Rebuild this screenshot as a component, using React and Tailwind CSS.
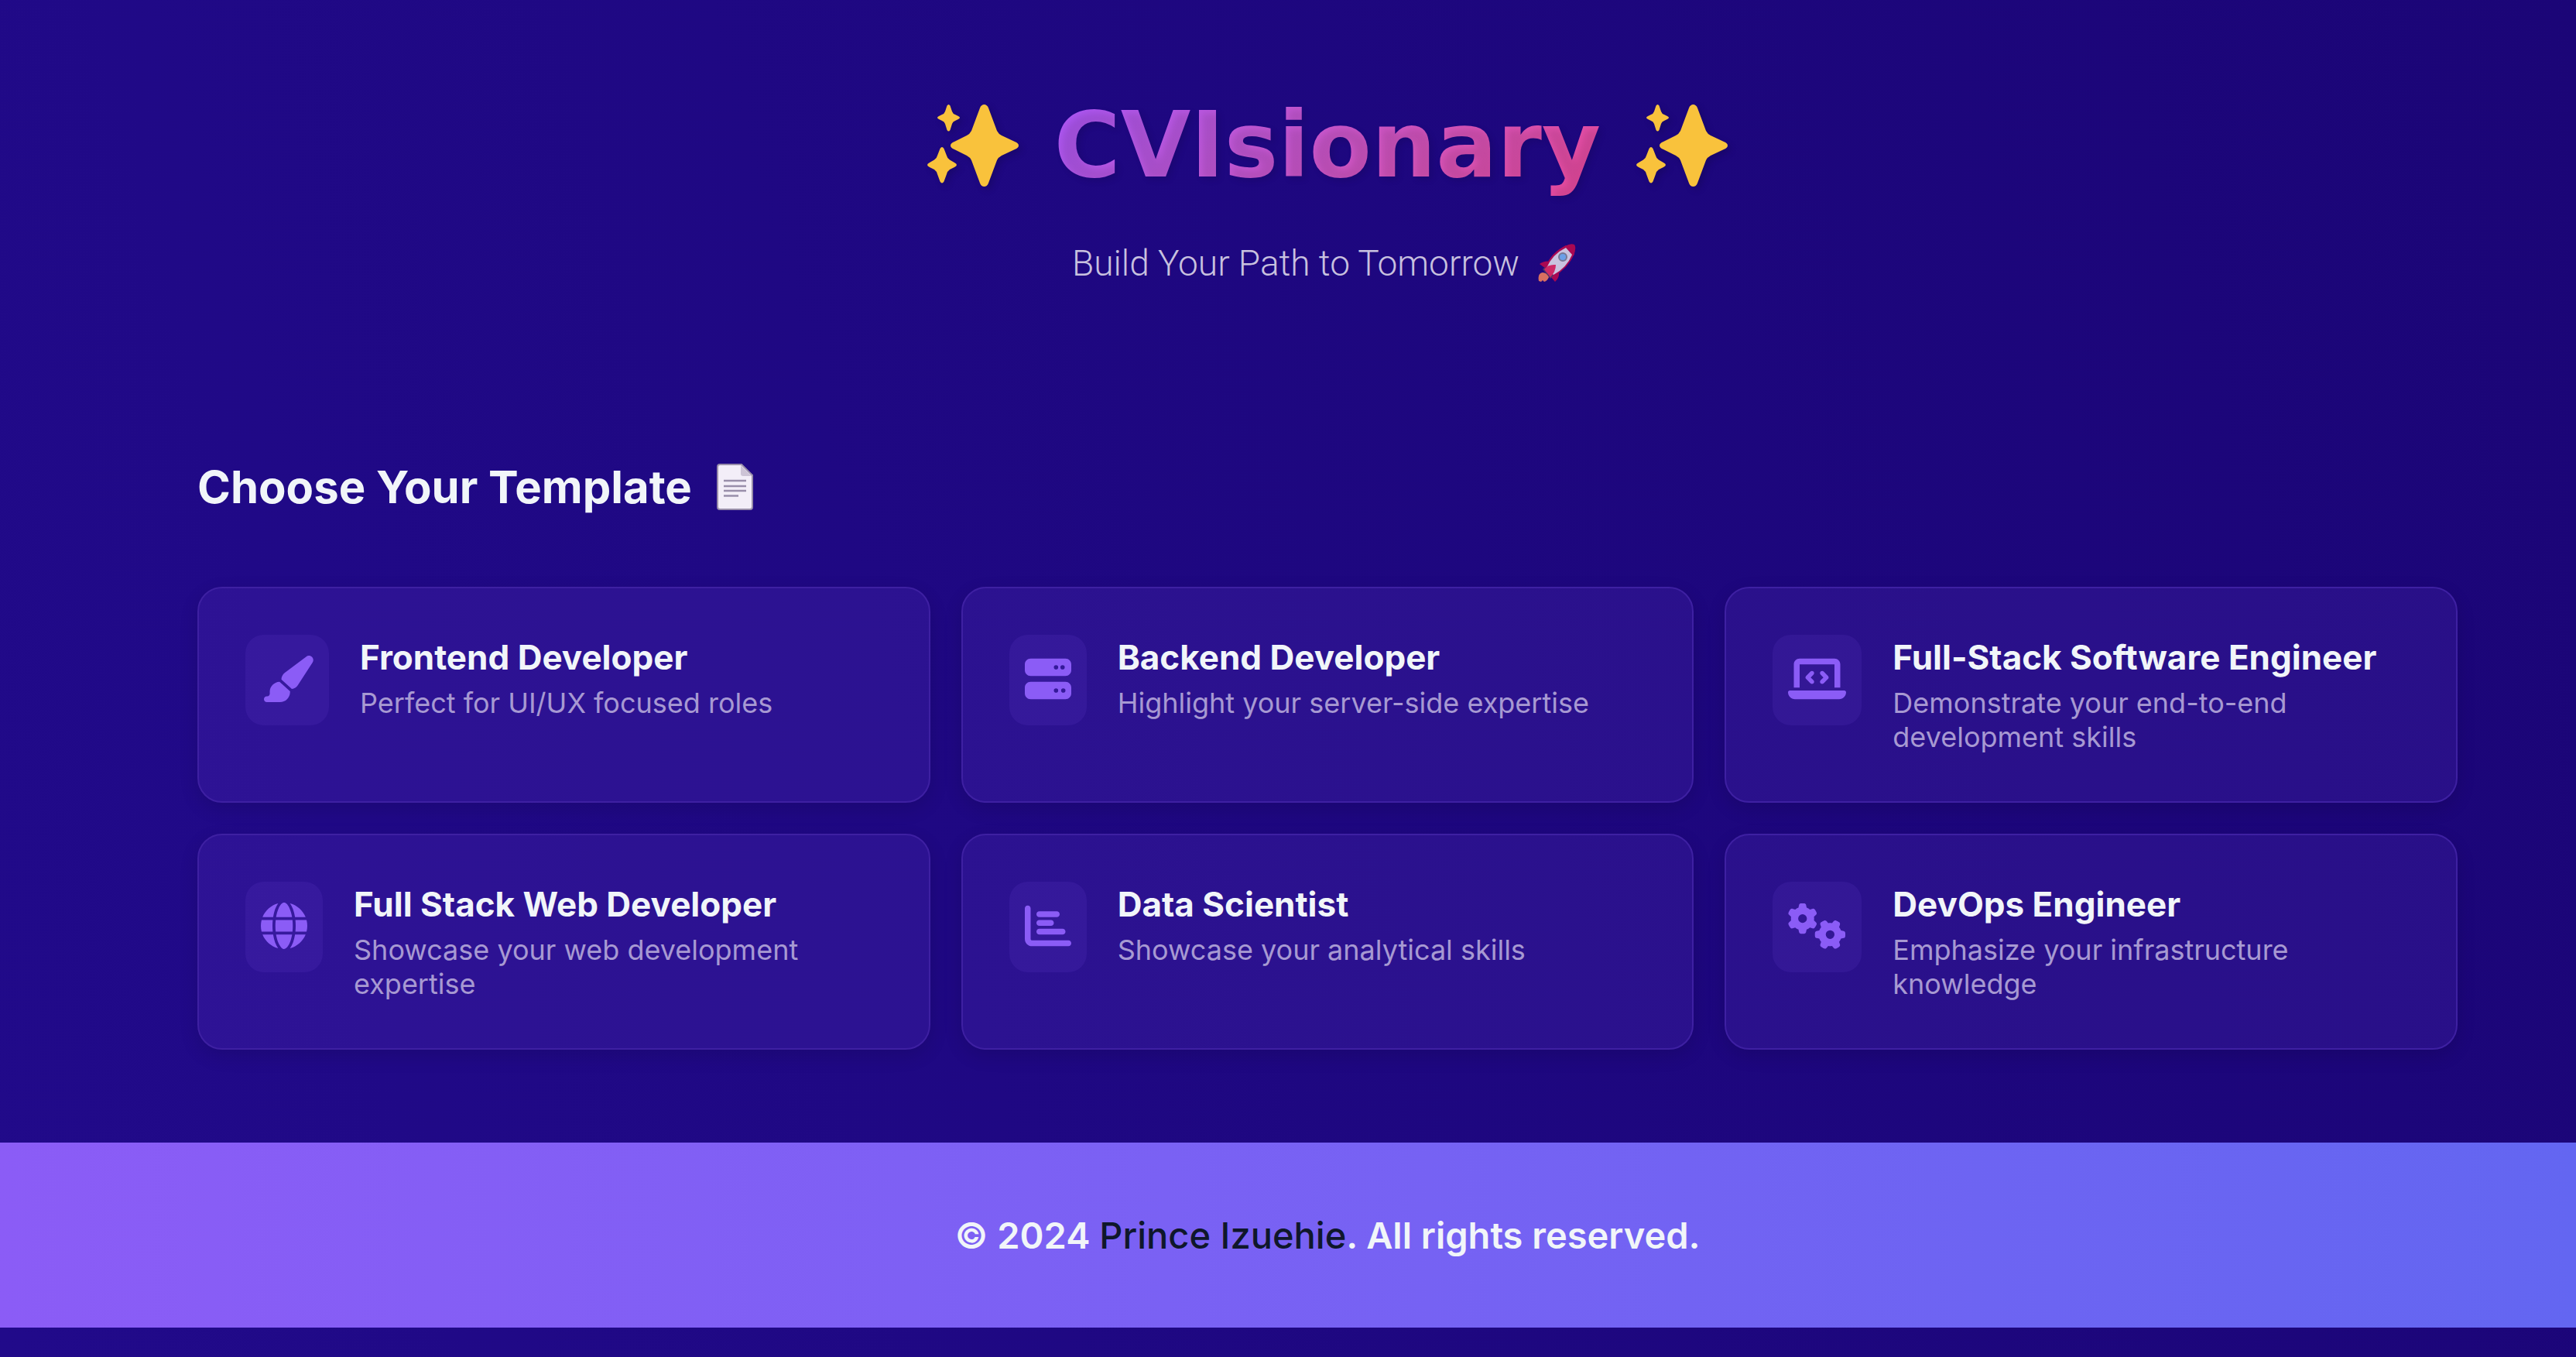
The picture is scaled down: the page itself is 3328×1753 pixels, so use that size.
import { FaPaintbrush, FaServer, FaLaptopCode, FaGlobe, FaChartBar, FaGears } from "react-icons/fa6";

const templates = [
  { title: "Frontend Developer", text: "Perfect for UI/UX focused roles", Icon: FaPaintbrush, size: "w-[68px]" },
  { title: "Backend Developer", text: "Highlight your server-side expertise", Icon: FaServer, size: "w-[60px]" },
  { title: "Full-Stack Software Engineer", text: "Demonstrate your end-to-end development skills", Icon: FaLaptopCode, size: "w-[75px]" },
  { title: "Full Stack Web Developer", text: "Showcase your web development expertise", Icon: FaGlobe, size: "w-[60px]" },
  { title: "Data Scientist", text: "Showcase your analytical skills", Icon: FaChartBar, size: "w-[60px]" },
  { title: "DevOps Engineer", text: "Emphasize your infrastructure knowledge", Icon: FaGears, size: "w-[75px]" },
];

function Sparkles() {
  return (
    <svg viewBox="0 0 118 106" className="h-[106px] w-[118px] shrink-0 drop-shadow-[4px_4px_4px_rgba(0,0,0,0.15)]" fill="#f9c23c" aria-hidden="true">
      <path d="M68 4.500C70-1.500 77-1.500 79 4.500L90 34Q92 38 96 40L113 48Q118 50 118 53Q118 56 113 58L96 66Q92 68 90 72L79 101.500C77 107.500 70 107.500 68 101.500L57 72Q55 68 51 66L35 58Q30 56 30 53Q30 50 35 48L51 40Q55 38 57 34Z" />
      <path d="M25.500 1.500Q27.500-1.500 29.500 1.500L32 9Q33 12 36 13L40 15Q44 17 40 19L36 21Q33 22 32 25L29.500 33Q27.500 36 25.500 33L23 25Q22 22 19 21L15 19Q11 17 15 15L19 13Q22 12 23 9Z" />
      <path d="M16.500 57Q19 53 21.500 57L25 66Q26 70 29 71.500L35 75Q41 78 35 81L29 84Q26 86 25 90L21.500 99.500Q19 103.500 16.500 99.500L13 90Q12 86 9 84L3 81Q-3 78 3 75L9 71.500Q12 70 13 66Z" />
    </svg>
  );
}

function Rocket() {
  return (
    <svg viewBox="0 0 50 50" className="size-[50px] shrink-0" aria-hidden="true">
      <path d="M1 48Q-1 38 6 37Q13 38 14 43Q12 48 8 49L6 47L4 49Z" fill="#d86f60" />
      <path d="M2 26Q8 21 17 23L10 32ZM27 36Q28 44 22 49L16 42Z" fill="#a90852" />
      <path d="M9 31Q17 11 36 2L47 13Q38 33 20 42Z" fill="#a90852" />
      <path d="M11 31Q19 13 36 5L44 14Q37 31 20 40Z" fill="#c9c2df" />
      <path d="M35 3Q42-1 47 1Q50 5 46 15Z" fill="#a90852" />
      <path d="M6 33L9 30L20 41L16 45Z" fill="#513567" />
      <path d="M8 33Q13 26 23 27Q23 36 16 43Z" fill="#cf2866" />
      <circle cx="32" cy="17" r="5" fill="#6c9fe8" stroke="#777795" strokeWidth="2" />
    </svg>
  );
}

function Page() {
  return (
    <svg viewBox="0 0 47 60" className="h-[60px] w-[47px] shrink-0" aria-hidden="true">
      <path d="M4 1H32L46 15V56Q46 59 43 59H4Q1 59 1 56V4Q1 1 4 1Z" fill="#f3eef8" stroke="#998eaa" strokeWidth="2" />
      <path d="M31 2L45 16H34Q31 16 31 13Z" fill="#cdc4d6" />
      <path d="M9 22H38M9 29H38M9 35H38M9 41.500H28" stroke="#998eaa" strokeWidth="2.500" />
    </svg>
  );
}

export default function App() {
  return (
    <div className="flex min-h-screen flex-col bg-linear-75 from-[#210a8a] to-[#1b0577] font-['Inter',sans-serif] text-slate-100">
      <header className="flex flex-col items-center pt-[114px] pl-[102px]">
        <div className="flex items-center gap-[46px]">
          <Sparkles />
          <h1 className="bg-linear-135 from-[#a855f7] to-[#ec4899] bg-clip-text font-['DejaVu_Sans',sans-serif] text-[117px] leading-[148px] font-bold text-transparent [text-shadow:4px_4px_8px_rgba(0,0,0,0.1)]">
            CVIsionary
          </h1>
          <Sparkles />
        </div>
        <p className="mt-[46px] flex items-center gap-6 pr-2 font-['Roboto',sans-serif] text-[46px] leading-[64px] font-light text-[#c8c1df]">
          Build Your Path to Tomorrow
          <Rocket />
        </p>
      </header>
      <main className="pt-[218px] pr-[153px] pb-[120px] pl-[255px]">
        <h2 className="flex items-center gap-8 text-[58px] leading-[78px] font-bold">
          Choose Your Template
          <Page />
        </h2>
        <div className="mt-[90px] grid grid-cols-3 gap-10">
          {templates.map(({ title, text, Icon, size }) => (
            <button
              key={title}
              type="button"
              className="flex min-h-[279px] items-start gap-10 rounded-[32px] border-2 border-[#3e20a2] bg-[#8b5cf6]/12 p-[60px] text-left shadow-[0_8px_24px_rgba(0,0,0,0.12)]"
            >
              <span className="shrink-0 rounded-3xl bg-[#8b5cf6]/10 px-5 pt-[27px] pb-[30px]">
                <Icon className={`h-[60px] text-[#8b5cf6] ${size}`} aria-hidden="true" />
              </span>
              <span className="block">
                <span className="block text-[44px] leading-[58px] font-bold">{title}</span>
                <span className="mt-2 block text-[36px] leading-[44px] text-[#a799d2]">{text}</span>
              </span>
            </button>
          ))}
        </div>
      </main>
      <footer className="bg-linear-to-r from-[#8b5cf6] to-[#6366f1] py-[87px] pl-[102px] text-center text-[47px] leading-[65px] font-semibold">
        © 2024{" "}
        <a href="#" className="font-medium text-slate-900">
          Prince Izuehie
        </a>
        . All rights reserved.
      </footer>
    </div>
  );
}
